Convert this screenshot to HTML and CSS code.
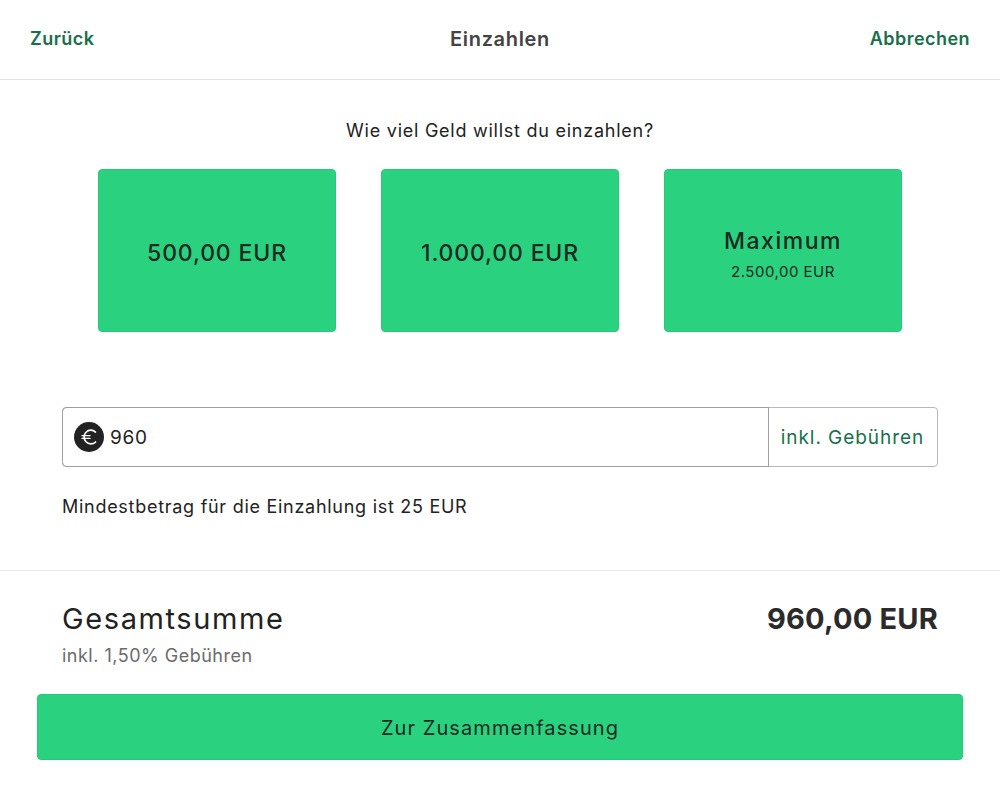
FILE: index.html
```html
<!DOCTYPE html>
<html lang="de">
<head>
<meta charset="utf-8">
<title>Einzahlen</title>
<link rel="stylesheet" href="styles.css">
</head>
<body>
<header class="topbar">
  <a class="link">Zurück</a>
  <h1 class="title">Einzahlen</h1>
  <a class="link link-end">Abbrechen</a>
</header>
<main class="amounts">
  <p class="question">Wie viel Geld willst du einzahlen?</p>
  <div class="cards">
    <button class="card"><span class="card-main">500,00 EUR</span></button>
    <button class="card"><span class="card-main">1.000,00 EUR</span></button>
    <button class="card"><span class="card-main card-max">Maximum</span><span class="card-sub">2.500,00 EUR</span></button>
  </div>
  <div class="field">
    <div class="field-input">
      <svg class="euro" viewBox="0 0 30 30" width="30" height="30" aria-hidden="true">
        <circle cx="15" cy="15" r="15" fill="#222"/>
        <path d="M21.5 10A6.8 6.8 0 1 0 21.5 20" fill="none" stroke="#fff" stroke-width="1.7" stroke-linecap="round"/>
        <path d="M8 13.6H16M8 16.4H16" fill="none" stroke="#fff" stroke-width="1.4" stroke-linecap="round"/>
      </svg>
      <span class="value">960</span>
    </div>
    <div class="field-addon">inkl. Gebühren</div>
  </div>
  <p class="hint">Mindestbetrag für die Einzahlung ist 25 EUR</p>
</main>
<section class="summary">
  <div class="total-row">
    <span class="total-label">Gesamtsumme</span>
    <span class="total-value">960,00 EUR</span>
  </div>
  <p class="fee">inkl. 1,50% Gebühren</p>
</section>
<div class="action">
  <button class="cta">Zur Zusammenfassung</button>
</div>
</body>
</html>
```
FILE: styles.css
```css
* { box-sizing: border-box; }
html, body { margin: 0; padding: 0; background: #fff; }
body {
  width: 1000px;
  height: 797px;
  overflow: hidden;
  font-family: "Inter", "Liberation Sans", sans-serif;
  color: #222;
}
p, h1 { margin: 0; }
.topbar {
  height: 80px;
  padding: 0 30px 2px;
  border-bottom: 1px solid #e2e2e2;
  display: grid;
  grid-template-columns: 1fr auto 1fr;
  align-items: center;
}
.link {
  font-size: 18px;
  font-weight: 600;
  color: #17704a;
  letter-spacing: .45px;
}
.link-end { text-align: right; }
.title {
  font-size: 20px;
  font-weight: 600;
  color: #444;
  letter-spacing: .65px;
}
.amounts {
  padding: 40px 62px 0;
  height: 491px;
  border-bottom: 1px solid #e8e8e8;
}
.question {
  font-size: 18px;
  line-height: 22px;
  text-align: center;
  letter-spacing: .75px;
}
.cards {
  margin-top: 27px;
  display: flex;
  justify-content: center;
  gap: 45px;
}
.card {
  width: 238px;
  height: 163px;
  background: #2ad27f;
  border: 1px solid #25c97a;
  border-radius: 4px;
  color: #1c2a22;
  font-family: inherit;
  display: flex;
  flex-direction: column;
  align-items: center;
  justify-content: center;
  padding: 5px 0 0;
}
.card-main { font-size: 23px; font-weight: 500; line-height: 30px; letter-spacing: .85px; }
.card-max { letter-spacing: 1.5px; }
.card-sub { font-size: 15px; line-height: 18px; margin-top: 7px; letter-spacing: .5px; }
.field {
  margin-top: 75px;
  height: 60px;
  display: flex;
  border: 1px solid #b8b8b8;
  border-radius: 4px;
}
.field-input {
  flex: 1;
  display: flex;
  align-items: center;
  gap: 6px;
  padding-left: 11px;
  box-shadow: 0 0 0 1px #a0a0a0;
  border-radius: 4px 0 0 4px;
}
.value { font-size: 19px; letter-spacing: .7px; }
.field-addon {
  width: 169px;
  display: flex;
  align-items: center;
  justify-content: center;
  font-size: 19px;
  letter-spacing: .95px;
  color: #17704a;
}
.hint {
  margin-top: 29px;
  font-size: 18px;
  line-height: 22px;
  letter-spacing: .72px;
}
.summary { padding: 29px 62px 0; height: 123px; }
.total-row {
  display: flex;
  justify-content: space-between;
  align-items: center;
  height: 36px;
}
.total-label { font-size: 29px; font-weight: 400; letter-spacing: 1.6px; }
.total-value { font-size: 29px; font-weight: 700; color: #2b2b2b; letter-spacing: .2px; }
.fee {
  margin-top: 9px;
  font-size: 18px;
  line-height: 22px;
  letter-spacing: .5px;
  color: #6b6b6b;
}
.action { padding: 0 37px; }
.cta {
  width: 100%;
  height: 66px;
  background: #2ad27f;
  border: 1px solid #25c97a;
  border-radius: 4px;
  color: #1c2a22;
  font-family: inherit;
  font-size: 20px;
  letter-spacing: 1.08px;
  padding: 2px 0 0;
}
```
